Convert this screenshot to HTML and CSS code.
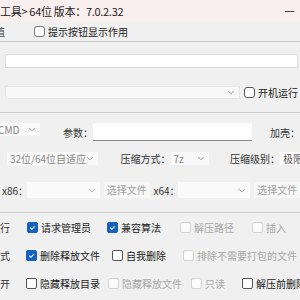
FILE: index.html
```html
<!DOCTYPE html>
<html lang="zh-CN">
<head>
    <meta charset="UTF-8">
    <title>打包工具</title>
    <link rel="stylesheet" href="styles.css">
</head>
<body>
    <div class="title">
        <span class="title-text">工具&gt; 64位 版本：7.0.2.32</span>
        <span class="min"></span>
    </div>
    <div class="toolbar">
        <span class="cut">值</span>
        <span class="ck ck-tool"><i class="box"></i>提示按钮显示作用</span>
    </div>

    <div class="group g1">
        <div class="input-row"><span class="edit"></span></div>
        <div class="input-row">
            <span class="combo combo-wide"><svg class="arrow" viewBox="0 0 8 5"><path d="M1 1l3 3 3-3"/></svg></span>
            <span class="ck ck-boot"><i class="box"></i>开机运行</span>
        </div>
    </div>

    <div class="group g2">
        <div class="row row-a">
            <span class="combo combo-cmd">CMD<svg class="arrow" viewBox="0 0 8 5"><path d="M1 1l3 3 3-3"/></svg></span>
            <span class="lbl lbl-param">参数：</span>
            <span class="edit edit-param"></span>
            <span class="lbl lbl-shell">加壳：</span>
        </div>
        <div class="row row-b">
            <span class="combo combo-arch">32位/64位自适应<svg class="arrow" viewBox="0 0 8 5"><path d="M1 1l3 3 3-3"/></svg></span>
            <span class="lbl lbl-mode">压缩方式：</span>
            <span class="combo combo-7z">7z<svg class="arrow" viewBox="0 0 8 5"><path d="M1 1l3 3 3-3"/></svg></span>
            <span class="lbl lbl-level">压缩级别：</span>
            <span class="combo combo-level">极限</span>
        </div>
        <div class="row row-c">
            <span class="lbl lbl-x86">x86：</span>
            <span class="combo combo-file"><svg class="arrow" viewBox="0 0 8 5"><path d="M1 1l3 3 3-3"/></svg></span>
            <span class="btn">选择文件</span>
            <span class="lbl lbl-x64">x64：</span>
            <span class="combo combo-file"><svg class="arrow" viewBox="0 0 8 5"><path d="M1 1l3 3 3-3"/></svg></span>
            <span class="btn">选择文件</span>
        </div>
    </div>

    <div class="group g3">
        <div class="crow crow-1">
            <span class="lbl">行</span>
            <span class="ck on"><i class="box"><svg viewBox="0 0 10 10"><path d="M2.5 5.2l1.8 1.8 3.4-3.6"/></svg></i>请求管理员</span>
            <span class="ck on"><i class="box"><svg viewBox="0 0 10 10"><path d="M2.5 5.2l1.8 1.8 3.4-3.6"/></svg></i>兼容算法</span>
            <span class="ck off"><i class="box"></i>解压路径</span>
            <span class="ck off"><i class="box"></i>插入</span>
        </div>
        <div class="crow crow-2">
            <span class="lbl">式</span>
            <span class="ck on"><i class="box"><svg viewBox="0 0 10 10"><path d="M2.5 5.2l1.8 1.8 3.4-3.6"/></svg></i>删除释放文件</span>
            <span class="ck"><i class="box"></i>自我删除</span>
            <span class="ck off"><i class="box"></i>排除不需要打包的文件</span>
        </div>
        <div class="crow crow-3">
            <span class="lbl">开</span>
            <span class="ck"><i class="box"></i>隐藏释放目录</span>
            <span class="ck off"><i class="box"></i>隐藏释放文件</span>
            <span class="ck off"><i class="box"></i>只读</span>
            <span class="ck"><i class="box"></i>解压前删除</span>
        </div>
    </div>
</body>
</html>
```
FILE: styles.css
```css
* {
    padding: 0;
    margin: 0;
    box-sizing: border-box;
}
body {
    width: 300px;
    height: 300px;
    overflow: hidden;
    background-color: #f0f0f0;
    font-family: "Noto Sans CJK SC", "Noto Sans", sans-serif;
    font-size: 10px;
    color: #333;
    white-space: nowrap;
}
.title {
    height: 22px;
    display: flex;
    align-items: center;
    justify-content: space-between;
    background-color: #f9efef;
    font-size: 11px;
    color: #222;
}
.title-text {
    letter-spacing: -0.3px;
}
.min {
    width: 9px;
    height: 1px;
    margin-right: 6px;
    background-color: #444;
}
.toolbar {
    height: 20px;
    display: flex;
    align-items: center;
    border-bottom: 1px solid #c9c9c9;
}
.cut {
    margin-left: -5px;
    width: 10px;
    color: #444;
}
.ck-tool {
    margin-left: 29px;
    color: #666;
}
.ck-tool .box {
    width: 11px;
    height: 11px;
    border-color: #777;
    border-radius: 3px;
}
.group {
    border-bottom: 1px solid #cbcbcb;
}
.g1 {
    height: 71px;
    padding: 12px 2px 0 5px;
}
.input-row {
    display: flex;
    align-items: center;
}
.input-row + .input-row {
    margin-top: 17px;
}
.edit {
    display: block;
    flex: 1;
    height: 14px;
    background-color: #fff;
    border: 1px solid #dcdcdc;
}
.combo {
    display: flex;
    align-items: center;
    justify-content: space-between;
    height: 13px;
    padding: 0 4px 0 3px;
    background-color: #f9f9f9;
    color: #888;
}
.arrow {
    width: 8px;
    height: 5px;
    fill: none;
    stroke: #aaa;
    stroke-width: 1;
}
.combo-wide {
    width: 253px;
    border: 1px solid #e6e6e6;
    justify-content: flex-end;
}
.ck-boot {
    margin-left: 4px;
}
.ck-boot .box {
    width: 11px;
    height: 11px;
    border-color: #555;
    border-radius: 3px;
}
.g2 {
    height: 100px;
    padding-top: 10px;
}
.row {
    display: flex;
    align-items: center;
}
.row-a {
    height: 18px;
    margin-left: -8px;
}
.row-b {
    height: 13px;
    margin-top: 11px;
    padding-left: 7px;
}
.row-c {
    height: 16px;
    margin-top: 17px;
    padding-left: 2px;
}
.combo-cmd {
    width: 48px;
    align-self: flex-start;
    padding-left: 6px;
    background-color: #fafafa;
}
.lbl {
    display: block;
    color: #333;
}
.lbl-param {
    margin-left: 23px;
    width: 30px;
}
.edit-param {
    flex: none;
    width: 159px;
    height: 18px;
    border: none;
    border-bottom: 1px solid #8a8a8a;
}
.lbl-shell {
    margin-left: 18px;
}
.combo-arch {
    width: 93px;
}
.lbl-mode {
    margin-left: 22px;
    width: 51px;
}
.combo-7z {
    width: 39px;
}
.lbl-level {
    margin-left: 21px;
    width: 51px;
}
.combo-level {
    width: 20px;
    background-color: #fff;
    color: #555;
}
.lbl-x86 {
    width: 25px;
}
.lbl-x64 {
    margin-left: 4px;
    width: 24px;
}
.combo-file {
    width: 73px;
    height: 16px;
    background-color: #fafafa;
    justify-content: flex-end;
}
.btn {
    margin-left: 4px;
    width: 46px;
    height: 16px;
    line-height: 16px;
    padding-left: 3px;
    background-color: #f7f7f7;
    color: #a0a0a0;
}
.g3 {
    border-bottom: none;
}
.crow {
    height: 28px;
    display: grid;
    align-items: center;
}
.crow-1 {
    grid-template-columns: 27px 80px 73px 72px auto;
}
.crow-2 {
    grid-template-columns: 26px 86px 71px auto;
}
.crow-3 {
    grid-template-columns: 26px 82px 83px 51px auto;
}
.ck {
    display: flex;
    align-items: center;
    gap: 3px;
    color: #222;
}
.box {
    display: block;
    width: 11px;
    height: 11px;
    border: 1px solid #555;
    border-radius: 2px;
    background-color: #fff;
}
.box svg {
    display: block;
    width: 9px;
    height: 9px;
    fill: none;
    stroke: #fff;
    stroke-width: 1.2;
}
.ck.on .box {
    background-color: #1660c0;
    border-color: #1660c0;
}
.ck.off {
    color: #a8a8a8;
}
.ck.off .box {
    border-color: #d4d4d4;
    background-color: #fbfbfb;
}
```
